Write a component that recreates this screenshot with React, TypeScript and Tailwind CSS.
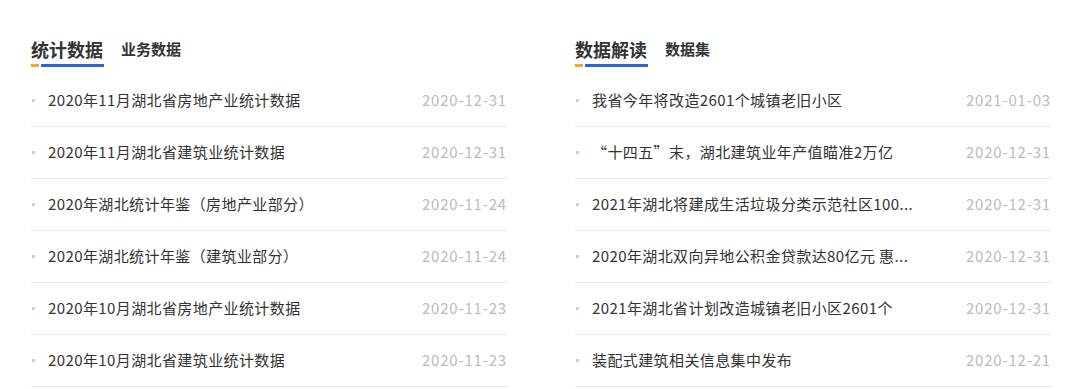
const stats = [
  { title: "2020年11月湖北省房地产业统计数据", date: "2020-12-31" },
  { title: "2020年11月湖北省建筑业统计数据", date: "2020-12-31" },
  { title: "2020年湖北统计年鉴（房地产业部分）", date: "2020-11-24" },
  { title: "2020年湖北统计年鉴（建筑业部分）", date: "2020-11-24" },
  { title: "2020年10月湖北省房地产业统计数据", date: "2020-11-23" },
  { title: "2020年10月湖北省建筑业统计数据", date: "2020-11-23" },
];

const reads = [
  { title: "我省今年将改造2601个城镇老旧小区", date: "2021-01-03" },
  { title: "“十四五”末，湖北建筑业年产值瞄准2万亿", date: "2020-12-31" },
  { title: "2021年湖北将建成生活垃圾分类示范社区100...", date: "2020-12-31" },
  { title: "2020年湖北双向异地公积金贷款达80亿元 惠...", date: "2020-12-31" },
  { title: "2021年湖北省计划改造城镇老旧小区2601个", date: "2020-12-31" },
  { title: "装配式建筑相关信息集中发布", date: "2020-12-21" },
];

type Item = { title: string; date: string };

function Panel({ title, sub, items }: { title: string; sub: string; items: Item[] }) {
  return (
    <div className="w-[476px]">
      {/* 标题 */}
      <div className="flex items-end h-[30px]">
        <h2 className="text-[18px] leading-[24px] font-bold text-[#333]">{title}</h2>
        <span className="ml-[18px] mb-[2px] text-[15px] leading-[20px] font-bold text-[#333]">{sub}</span>
      </div>
      <div className="flex items-center gap-[2px] mt-[3px] h-[3px]">
        <span className="w-[8px] h-[3px] bg-[#f5a623]" />
        <span className="w-[63px] h-[3px] bg-[#2f62dd]" />
      </div>

      {/* 列表 */}
      <ul className="mt-[8px]">
        {items.map((it, i) => (
          <li key={i} className="flex items-center h-[52px] border-b border-[#e8e8e8]">
            <span className="w-[3px] h-[3px] ml-[1px] bg-[#bcd3ee]" />
            <span className="ml-[13px] flex-1 text-[15px] tracking-[0.4px] text-[#333] whitespace-nowrap overflow-hidden">
              {it.title}
            </span>
            <span className="text-[15px] tracking-[0.8px] text-[#bbb]">{it.date}</span>
          </li>
        ))}
      </ul>
    </div>
  );
}

export default function App() {
  return (
    <div
      className="w-[1078px] h-[389px] bg-white pl-[31px] pt-[31px] flex gap-[68px] overflow-hidden"
      style={{ fontFamily: '"Noto Sans CJK SC", "Noto Sans", sans-serif' }}
    >
      <Panel title="统计数据" sub="业务数据" items={stats} />
      <Panel title="数据解读" sub="数据集" items={reads} />
    </div>
  );
}
